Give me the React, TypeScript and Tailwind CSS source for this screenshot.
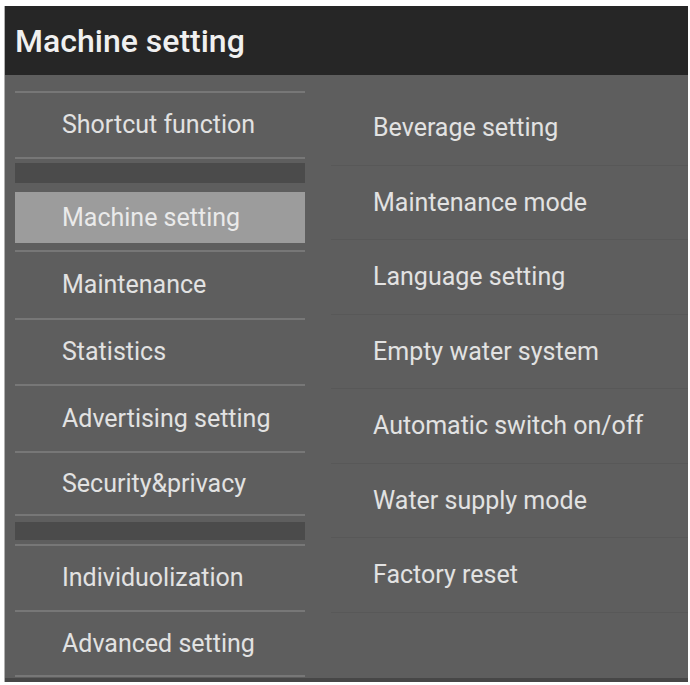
import React from "react";

const groupA = ["Maintenance", "Statistics", "Advertising setting", "Security&privacy"];
const groupB = ["Individuolization", "Advanced setting"];
const options = [
  "Beverage setting",
  "Maintenance mode",
  "Language setting",
  "Empty water system",
  "Automatic switch on/off",
  "Water supply mode",
  "Factory reset",
];

const MenuItem: React.FC<{ label: string; h: string }> = ({ label, h }) => (
  <div className={`${h} flex items-center border-b-2 border-[#777777] pl-[47px] text-[25px] text-[#e2e2e2]`}>
    {label}
  </div>
);

const App: React.FC = () => {
  return (
    <div className="w-[690px] h-[685px] bg-white pt-[6px] pl-[4px] pr-[2px] pb-[3px] font-['Roboto',sans-serif]">
      <div className="flex h-full flex-col border-l border-[#b0b0b0] bg-[#5e5e5e]">
        <header className="flex h-[69px] shrink-0 items-center bg-[#262626] pl-[10px]">
          <h1 className="text-[32px] font-medium text-[#f0f0f0]">Machine setting</h1>
        </header>

        <div className="flex flex-1 border-b-4 border-[#474747]">
          {/* left menu */}
          <nav className="ml-[10px] flex w-[290px] flex-col pt-[16px]">
            <div className="border-t-2 border-[#777777]">
              <MenuItem label="Shortcut function" h="h-[66px]" />
            </div>
            <div className="mt-[4px] h-[20px] bg-[#4b4b4b]" />
            <div className="mt-[9px] flex h-[51px] items-center bg-[#9c9c9c] pl-[47px] text-[25px] text-[#eaeaea]">
              Machine setting
            </div>
            <div className="mt-[7px] border-t-2 border-[#777777]">
              <MenuItem label={groupA[0]} h="h-[68px]" />
              <MenuItem label={groupA[1]} h="h-[66px]" />
              <MenuItem label={groupA[2]} h="h-[67px]" />
              <MenuItem label={groupA[3]} h="h-[63px]" />
            </div>
            <div className="mt-[6px] h-[18px] bg-[#4b4b4b]" />
            <div className="mt-[4px] border-t-2 border-[#777777]">
              <MenuItem label={groupB[0]} h="h-[66px]" />
              <MenuItem label={groupB[1]} h="h-[65px]" />
            </div>
          </nav>

          {/* right options */}
          <section className="ml-[26px] flex flex-1 flex-col pt-[16px]">
            {options.map((o) => (
              <div
                key={o}
                className="flex h-[74.5px] items-center border-b border-[#585858] pl-[42px] text-[25px] text-[#e2e2e2]"
              >
                {o}
              </div>
            ))}
          </section>
        </div>
      </div>
    </div>
  );
};

export default App;
